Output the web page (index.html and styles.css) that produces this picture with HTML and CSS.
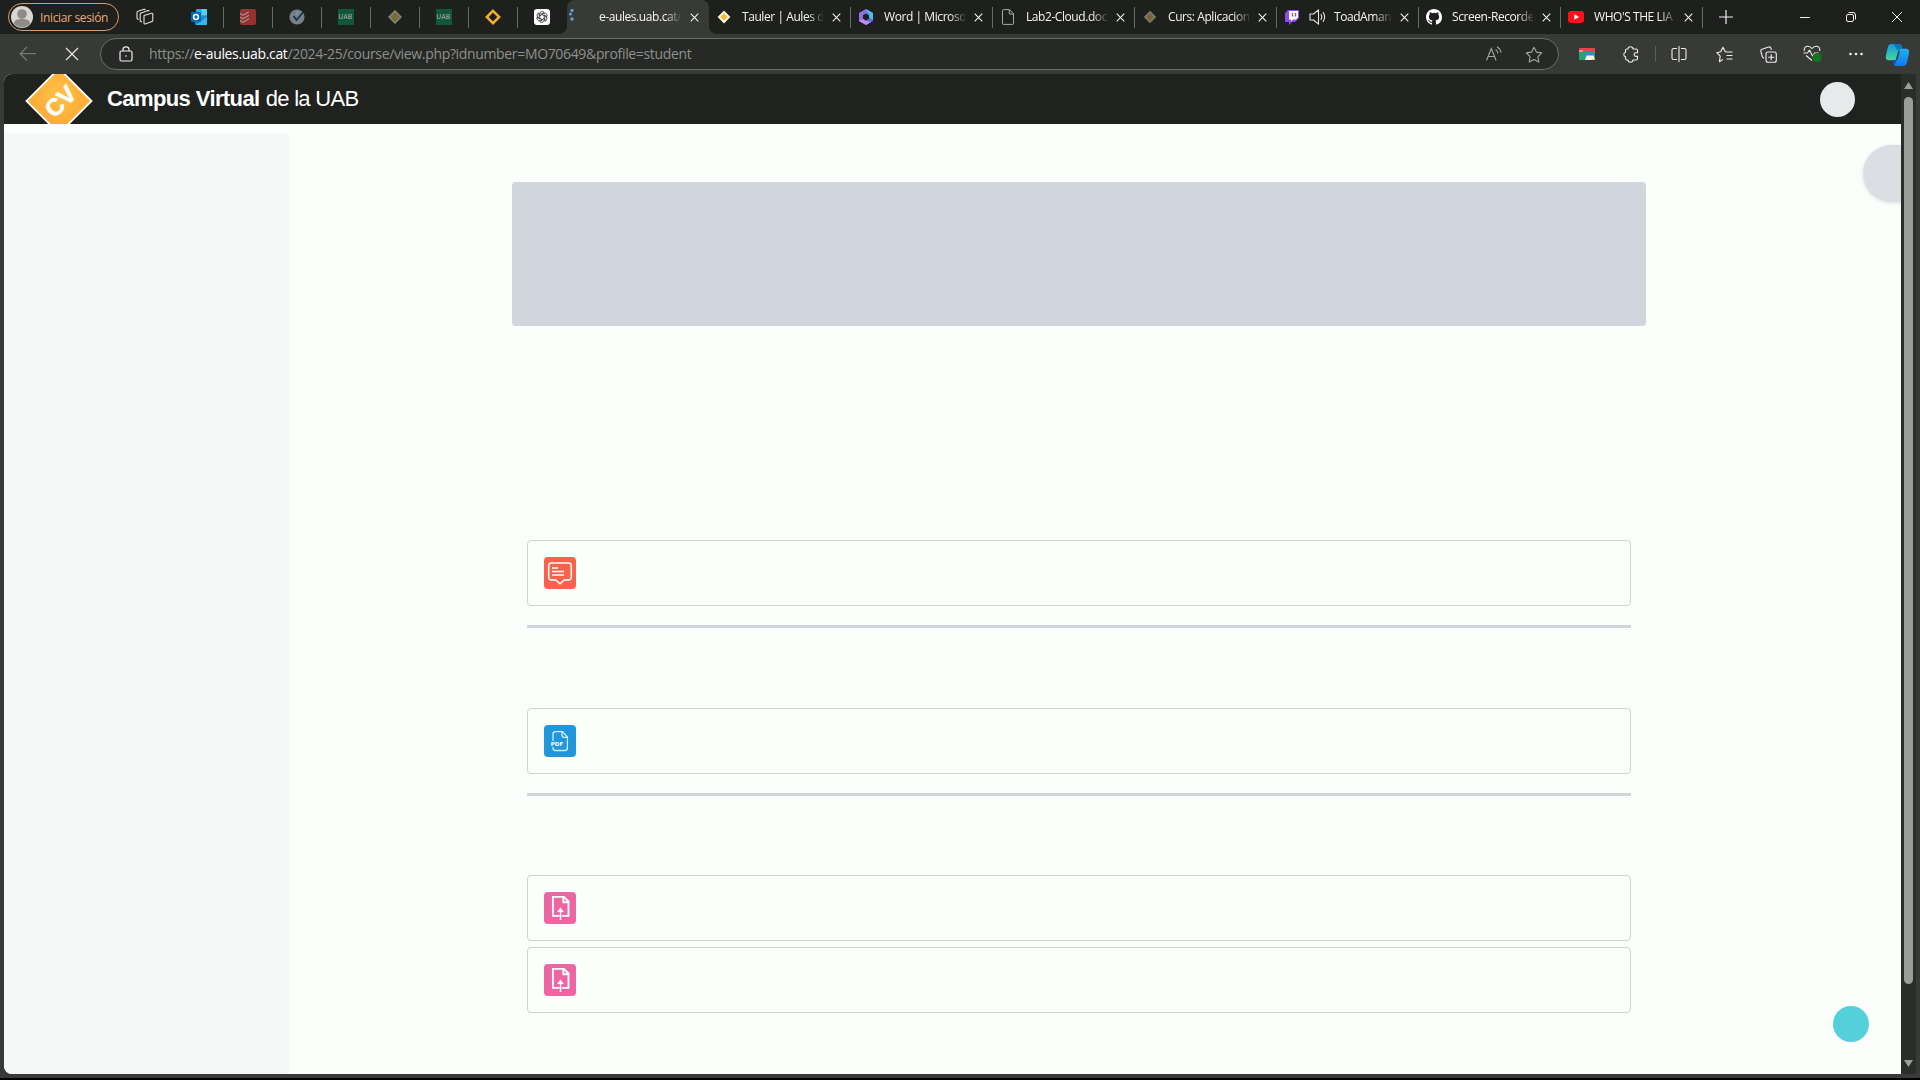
FILE: index.html
```html
<!DOCTYPE html>
<html lang="ca">
<head>
<meta charset="utf-8">
<title>Campus Virtual de la UAB</title>
<link rel="stylesheet" href="styles.css">
</head>
<body>
<svg class="defs" width="0" height="0">
  <symbol id="close" viewBox="0 0 10 10"><path d="M.8.8l8.4 8.4M9.2.8L.8 9.2" fill="none" stroke="currentColor" stroke-width="1.2"/></symbol>
  <symbol id="upload" viewBox="0 0 32 32"><path d="M15.500 23.900H8.900V4.900h11l4.600 4.600v14.400H18M19.300 5v5.200h5" fill="none" stroke="#fff" stroke-width="1.900"/><path d="M16.500 15.600l3.400 4.300h-6.800z" fill="#fff"/><path d="M16.500 18v10" stroke="#fff" stroke-width="1.500"/></symbol>
</svg>
<div class="browser">
  <header class="tabstrip">
    <button class="profile">
      <svg width="22" height="22" viewBox="0 0 22 22"><circle cx="11" cy="11" r="11" fill="#d8d6d3"/><circle cx="11" cy="8" r="4.800" fill="#8d8a87"/><path d="M3 17.500c0-3.500 3.500-4.500 8-4.500s8 1 8 4.500c-2 2.500-5 3.700-8 3.700s-6-1.200-8-3.700z" fill="#8d8a87"/></svg>
      <span>Iniciar sesión</span>
    </button>
    <div class="workspaces"><svg width="18" height="18" viewBox="0 0 18 18" fill="none" stroke="#e2e2e0" stroke-width="1.100" stroke-linejoin="round"><path d="M8 7.500l7.500-2.200q1.300-.3 1.300 1v6q0 1-1 1.300l-6.500 2.300q-1.300.4-1.300-1z"/><path d="M6 14l-1.200-.6q-.6-.3-.6-1V6.200q0-1 1-1.300L12 2.600q1-.3 1.200.8"/><path d="M2.600 11.500l-1-.5q-.6-.3-.6-1V4.500q0-1 1-1.300L8 1.300q1-.3 1.300.7"/></svg></div>
    <nav class="pinned">
      <div class="pin"><svg width="16" height="16" viewBox="0 0 16 16"><rect x="5" width="11" height="11" rx="1" fill="#28a8ea"/><path d="M10.500 0H15q1 0 1 1v5h-5.500z" fill="#50d0ff"/><path d="M4 7l12 0v8q0 1-1 1H5q-1 0-1-1z" fill="#1590d8"/><path d="M5 16L16 8v7q0 1-1 1z" fill="#35b8f1"/><rect y="3" width="10" height="10" rx="1" fill="#0668b3"/><circle cx="5" cy="8" r="2.400" fill="none" stroke="#fff" stroke-width="1.500"/></svg></div>
      <div class="pin dim"><svg width="16" height="16" viewBox="0 0 16 16"><rect width="16" height="16" rx="2" fill="#e03c3b"/><path d="M0 4.500l3 1.700 6-3.500M0 8l3 1.700 6-3.500M0 11.500l3 1.700 6-3.500" fill="none" stroke="#f1d5d1" stroke-width="1.200"/></svg></div>
      <div class="pin dim"><svg width="16" height="16" viewBox="0 0 16 16"><circle cx="8" cy="8" r="7.600" fill="#a9bccd"/><path d="M4.500 7l3 4 6.500-7.500" fill="none" stroke="#1c3552" stroke-width="1.700"/><path d="M8 2v4" stroke="#d7e3ef"/></svg></div>
      <div class="pin dim"><span class="uab">UAB</span></div>
      <div class="pin dim"><svg width="14" height="14" viewBox="0 0 14 14"><path d="M7 1l6 6-6 6-6-6z" fill="#b29b4d" stroke="#c2c1aa" stroke-width="1.500"/></svg></div>
      <div class="pin dim"><span class="uab">UAB</span></div>
      <div class="pin"><svg width="16" height="16" viewBox="0 0 16 16"><path d="M8 1.800L14.200 8 8 14.200 1.800 8z" fill="none" stroke="#f2ad35" stroke-width="2.500"/></svg></div>
      <div class="pin"><svg width="16" height="16" viewBox="0 0 16 16"><rect width="16" height="16" rx="3" fill="#fff"/><g fill="none" stroke="#222" stroke-width=".75" stroke-linejoin="round"><g id="knot"><path d="M5.800 9.300V5Q5.800 2.600 8.200 2.600q1.200 0 2 .8L7.100 5.300"/></g><use href="#knot" transform="rotate(60 8 8)"/><use href="#knot" transform="rotate(120 8 8)"/><use href="#knot" transform="rotate(180 8 8)"/><use href="#knot" transform="rotate(240 8 8)"/><use href="#knot" transform="rotate(300 8 8)"/></g></svg></div>
    </nav>
    <nav class="tabs">
      <div class="tab active"><svg class="fav spin" width="16" height="16" viewBox="0 0 16 16" fill="#5da5d0"><circle cx="5" cy="1.500" r="1.600"/><circle cx="3.500" cy="5" r="1.500"/><circle cx="5" cy="10" r="1.700"/></svg><span class="title">e-aules.uab.cat/</span><svg class="x"><use href="#close"/></svg></div>
      <div class="tab plain"><svg class="fav" width="16" height="16" viewBox="0 0 16 16"><path d="M8 3l5 5-5 5-5-5z" fill="#f6b73c" stroke="#fff4d8" stroke-width="2"/></svg><span class="title">Tauler | Aules de</span><svg class="x"><use href="#close"/></svg></div>
      <div class="tab"><svg class="fav" width="16" height="16" viewBox="0 0 16 16"><defs><linearGradient id="office" x1="0" x2="1" y1="0" y2="1"><stop stop-color="#a97ae8"/><stop offset="1" stop-color="#4b64d8"/></linearGradient></defs><path d="M8 0l7 4v8l-7 4-7-4V4z" fill="url(#office)"/><path d="M8 0l7 4v7l-4-2.500V5.500z" fill="#46bdf0"/><path d="M1 12l3-2 5 2 4 1-5 3z" fill="#c28cf3"/><path d="M8 4.600l3 1.700v3.400l-3 1.700-3-1.700V6.300z" fill="#1e201e"/></svg><span class="title">Word | Microso</span><svg class="x"><use href="#close"/></svg></div>
      <div class="tab"><svg class="fav" width="16" height="16" viewBox="0 0 16 16"><path d="M9.500.6H3.500Q2.500.6 2.500 1.600v12.800q0 1 1 1h9q1 0 1-1V4.800zM9.300.8v4.200h4" fill="none" stroke="#a9aba8"/></svg><span class="title">Lab2-Cloud.doc</span><svg class="x"><use href="#close"/></svg></div>
      <div class="tab"><svg class="fav" width="16" height="16" viewBox="0 0 16 16"><path d="M8 3l5 5-5 5-5-5z" fill="#78642d" stroke="#77776b" stroke-width="1.800"/></svg><span class="title">Curs: Aplicacion</span><svg class="x"><use href="#close"/></svg></div>
      <div class="tab audio"><svg class="fav" width="16" height="16" viewBox="0 0 16 16"><path d="M4 1h11v8l-4 4H8l-3 3v-3H1V4z" fill="#8d48ee"/><path d="M5 2h9v6.500l-2 2H9l-2 2v-2H5z" fill="#fff"/><path d="M8.500 4v3.500M11.500 4v3.500" stroke="#8d48ee" stroke-width="1.300"/></svg><svg class="sound" width="17" height="16" viewBox="0 0 17 16" fill="none" stroke="#e4e4e2" stroke-width="1.100" stroke-linejoin="round"><path d="M1 5h3.500L9.500.8v14.400L4.500 11H1z"/><path d="M12 5.500q1.500 2.500 0 5M14.200 3.500q2.800 4.500 0 9" stroke-linecap="round"/></svg><span class="title">ToadAman</span><svg class="x"><use href="#close"/></svg></div>
      <div class="tab"><svg class="fav" width="16" height="16" viewBox="0 0 16 16"><path fill="#fff" d="M8 0C3.580 0 0 3.580 0 8c0 3.540 2.290 6.530 5.470 7.590.4.070.55-.17.55-.38 0-.19-.01-.82-.01-1.490-2.010.37-2.530-.49-2.690-.94-.09-.23-.48-.94-.82-1.130-.28-.15-.68-.52-.01-.53.63-.01 1.080.58 1.230.82.720 1.210 1.870.87 2.330.66.070-.52.280-.87.510-1.070-1.780-.2-3.640-.89-3.640-3.950 0-.87.310-1.590.82-2.150-.08-.2-.36-1.020.08-2.120 0 0 .67-.21 2.200.82a7.600 7.600 0 0 1 4 0c1.530-1.040 2.200-.82 2.200-.82.44 1.100.16 1.920.08 2.120.51.560.82 1.270.82 2.150 0 3.070-1.870 3.750-3.650 3.950.29.250.54.730.54 1.480 0 1.070-.01 1.930-.01 2.200 0 .21.150.46.550.38A8.010 8.010 0 0 0 16 8c0-4.420-3.580-8-8-8z"/></svg><span class="title">Screen-Recorde</span><svg class="x"><use href="#close"/></svg></div>
      <div class="tab"><svg class="fav" width="16" height="16" viewBox="0 0 16 16"><rect y="2" width="16" height="12" rx="3" fill="#fd0f1b"/><path d="M6.300 5.300v5.400L11 8z" fill="#fff"/></svg><span class="title">WHO'S THE LIA</span><svg class="x"><use href="#close"/></svg></div>
    </nav>
    <div class="newtab"><svg width="14" height="14" viewBox="0 0 14 14"><path d="M7 0v14M0 7h14" stroke="#eee" stroke-width="1.200"/></svg></div>
    <div class="controls">
      <svg viewBox="0 0 10 10"><path d="M0 5.500h10"/></svg>
      <svg viewBox="0 0 10 10"><rect x=".5" y="2.500" width="7" height="7" rx="1.500"/><path d="M2.500.5H7q2.500 0 2.500 2.500v4.500"/></svg>
      <svg viewBox="0 0 10 10"><path d="M0 0l10 10M10 0L0 10"/></svg>
    </div>
  </header>

  <div class="toolbar">
    <div class="nav">
      <svg width="18" height="16" viewBox="0 0 18 16" fill="none" stroke="#767876" stroke-width="1.200"><path d="M8 1L1.200 7.700 8 14.500M1.200 7.700H17"/></svg>
      <svg width="14" height="14" viewBox="0 0 14 14" fill="none" stroke="#e8e8e6" stroke-width="1.200"><path d="M1 1l12 12M13 1L1 13"/></svg>
    </div>
    <div class="address">
      <svg width="14" height="16" viewBox="0 0 14 16" fill="none" stroke="#eee" stroke-width="1.200"><rect x="1" y="5" width="12" height="10" rx="1.500"/><path d="M4 5V3.500q0-2.700 3-2.700t3 2.700V5"/><circle cx="7" cy="10" r=".8" fill="#eee" stroke="none"/></svg>
      <span class="url">https://<b>e-aules.uab.cat</b>/2024-25/course/view.php?idnumber=MO70649&amp;profile=student</span>
      <svg class="aloud" width="18" height="16" viewBox="0 0 18 16" fill="none" stroke="#a4a6a3" stroke-width="1.100"><path d="M1.500 14.500L6.300 2.500l4.800 12M3 10.500h6.700M10.500 3.500q2 1 2.500 4M12 .8q3.500 2 4 6"/></svg>
      <svg width="18" height="17" viewBox="0 0 18 17" fill="none" stroke="#a4a6a3" stroke-width="1.100" stroke-linejoin="round"><path d="M9 1.200l2.400 4.900 5.400.8-3.900 3.800.9 5.400L9 13.500l-4.800 2.600.9-5.400L1.200 6.900l5.400-.8z"/></svg>
    </div>
    <div class="tools">
      <svg class="ext" width="16" height="14" viewBox="0 0 16 14"><g stroke="none"><rect y="1" width="16" height="12" rx="1" fill="#28a36b"/><path d="M1 1h14q1 0 1 1v3H0V2q0-1 1-1z" fill="#e84258"/><path d="M0 3h4v2H0z" fill="#f48a98"/><path d="M6 6h8l2 5H6z" fill="#3c82e0"/><path d="M7.500 8.500h7l1.500 4.500H6z" fill="#f4f4ec"/><path d="M12 13l4-2v2z" fill="#f2c33e"/></g></svg>
      <svg class="puzzle" width="16" height="17" viewBox="0 0 16 17"><path d="M5 3Q5 .8 7.500.8T10 3h3q1.500 0 1.500 1.500v2.300h-1.700q-1.700 0-1.700 1.800t1.700 1.800h1.700v2.100q0 1.500-1.500 1.500h-3q0 2.200-2.500 2.200T5 14H4q-1.500 0-1.500-1.500v-1.700Q.8 10.500.8 8.500t1.700-2.300V4.500Q2.500 3 4 3z"/></svg>
      <i class="rule"></i>
      <svg class="split" width="16" height="16" viewBox="0 0 16 16"><path d="M6 2.500H2.500Q1 2.500 1 4v8q0 1.500 1.500 1.500H6M10 2.500h3.500Q15 2.500 15 4v8q0 1.500-1.500 1.500H10M8 0v16"/></svg>
      <svg width="17" height="17" viewBox="0 0 17 17"><path d="M10.500 5.800H9.300L7 1.200 4.700 5.800.8 6.700l3.400 3.500-.8 5.500L7 13.400M10.500 6h6M10.500 9.500h6M10.500 13h6"/></svg>
      <svg width="17" height="17" viewBox="0 0 17 17"><rect x="6" y="6" width="10.300" height="10.300" rx="2"/><path d="M11.200 8.200v6M8.200 11.200h6M4 12.200q-1.300-.5-1.700-1.700L.9 5.500Q.5 3.800 2 3.200L8.500 1q1.500-.4 2.300 1l.7 1.700"/></svg>
      <svg width="19" height="18" viewBox="0 0 19 18"><path d="M1.300 6C.7 3 2.500 1.200 4.700 1.200q2.600 0 4.300 2.300 1.700-2.300 4.300-2.300c2.200 0 4 1.800 3.400 4.800M.5 8h4l2-3 3 6 2-3h4M3 10.500l6 5"/><circle cx="14" cy="12.500" r="4.500" fill="#13751f" stroke="none"/></svg>
      <svg width="16" height="16" viewBox="0 0 16 16"><g fill="#eee" stroke="none"><circle cx="2.500" cy="8" r="1.300"/><circle cx="8" cy="8" r="1.300"/><circle cx="13.500" cy="8" r="1.300"/></g></svg>
      <svg class="copilot" width="25" height="23" viewBox="0 0 26 24"><defs><linearGradient id="cpA" x1="0" y1="0" x2="0" y2="1"><stop stop-color="#1497e0"/><stop offset="1" stop-color="#3fdc9d"/></linearGradient><linearGradient id="cpB" x1="0" y1="0" x2="0" y2="1"><stop stop-color="#20b0ed"/><stop offset="1" stop-color="#1277f3"/></linearGradient></defs><g stroke="none"><path d="M6 1h8q3 0 3.500 3l.5 3h-1.500q-1 0-1.500 1.500L12.500 16q-.5 2-2 2H4q-4 0-3-5L3 4q.7-3 3-3z" fill="url(#cpA)"/><path d="M9 1h5q3 0 3.500 3l.5 3h-1.500q-2 0-3.500 1z" fill="#0878bd"/><path d="M17 6h5q4 0 3 5l-2 9q-1 4-4.500 4H12q-3 0-4-5h1.500q2 0 2.500-2L14.500 8q.5-2 2.500-2z" fill="url(#cpB)"/><path d="M7.500 18h4l-1 4q-2.500-1-3-4z" fill="#1445c8"/><path d="M14.800 8l-3 10" stroke="#383a37" stroke-width="1.600"/></g></svg>
    </div>
  </div>

  <div class="viewport">
    <div class="page">
      <div class="navbar">
        <svg class="logo" width="68" height="50" viewBox="0 0 68 50"><defs><radialGradient id="gold" cx=".5" cy=".4" r=".6"><stop stop-color="#ffc14b"/><stop offset="1" stop-color="#fba52b"/></radialGradient></defs><path d="M34-5.500L66.500 27 34 59.500 1.500 27z" fill="url(#gold)" stroke="#fff" stroke-width="1.800"/><text transform="translate(29.500 45) rotate(-45)" class="cv">CV</text></svg>
        <div class="brand"><strong>Campus Virtual</strong> <span>de la UAB</span></div>
        <div class="avatar"></div>
      </div>
      <div class="body">
        <aside class="sidebar"></aside>
        <main>
          <div class="banner"></div>
          <div class="sections">
            <section><div class="card"><svg class="act forum" viewBox="0 0 32 32"><path d="M7.500 6h17q2.800 0 2.800 3v11q0 3-2.800 3h-4.300l-4.200 3.800L11.800 23H7.500q-2.800 0-2.800-3V9q0-3 2.800-3z" fill="none" stroke="#fff" stroke-width="1.500"/><path d="M8 11h6M8 14.500h12M8 18h12" stroke="#fff" stroke-width="1.300"/></svg></div></section>
            <section><div class="card"><svg class="act pdf" viewBox="0 0 32 32"><path d="M9 16V9q0-2.400 2.500-2.400h7L23.400 12v11q0 2.500-2.500 2.500h-9.400Q9 25.500 9 23v-1M18 7v3q0 2.300 2.300 2.300h3" fill="none" stroke="#cfeeff" stroke-width="1.300"/><text x="6.800" y="21.200">PDF</text></svg></div></section>
            <section><div class="card"><svg class="act task"><use href="#upload"/></svg></div><div class="card"><svg class="act task"><use href="#upload"/></svg></div></section>
          </div>
        </main>
      </div>
      <div class="drawer-toggle"></div>
      <div class="help"></div>
    </div>
    <div class="scrollbar"><i class="up"></i><div class="thumb"></div><i class="down"></i></div>
  </div>
</div>
</body>
</html>
```
FILE: styles.css
```css
* { box-sizing: border-box; }
body { margin: 0; background: #000; overflow: hidden; font-family: "Open Sans", "Noto Sans", sans-serif; }
svg { display: block; flex: none; }
.defs { position: absolute; }
.browser { width: 1920px; height: 1078px; background: #383a37; display: flex; flex-direction: column; }

/* Tab strip */
.tabstrip { height: 34px; flex: none; background: #1e201e; display: flex; }
.profile { width: 111px; height: 28px; margin: 3px 0 0 8px; padding: 0 0 0 2px; border: 1px solid #d99b70; border-radius: 14px; background: none; display: flex; align-items: center; gap: 7px; font: 12px "Open Sans", sans-serif; letter-spacing: -.35px; color: #e9a77c; white-space: nowrap; }
.workspaces { width: 56px; display: flex; align-items: center; padding-left: 17px; }
.pinned { display: flex; width: 392px; }
.pin { width: 49px; display: flex; align-items: center; justify-content: center; padding-right: 2px; position: relative; }
.pin.dim > * { opacity: .62; }
.pin:not(:last-child)::after, .tab:not(.active)::after { content: ""; position: absolute; right: 0; top: 7px; width: 1px; height: 21px; background: #686a67; }
.uab { width: 16px; height: 16px; background: #0b7a4c; color: #c9dfd2; font: bold 6.5px/16px "Liberation Sans", sans-serif; text-align: center; }
.tabs { display: flex; }
.tab { width: 142px; height: 34px; padding: 0 10px 0 7px; display: flex; align-items: center; position: relative; color: #f4f4f2; font-size: 12px; letter-spacing: -.43px; }
.tab .title { width: 81px; margin-left: 10px; margin-top: -1px; white-space: nowrap; overflow: hidden; -webkit-mask-image: linear-gradient(90deg, #000 66px, transparent 83px); mask-image: linear-gradient(90deg, #000 66px, transparent 83px); }
.tab.audio .title { width: 57px; margin-left: 9px; -webkit-mask-image: linear-gradient(90deg, #000 40px, transparent 59px); mask-image: linear-gradient(90deg, #000 40px, transparent 59px); }
.tab .sound { margin-left: 9px; margin-right: -1px; }
.tab .x { width: 9px; height: 9px; margin-left: auto; }
.tab.active { background: #383a37; border-radius: 8px 8px 0 0; padding-left: 0; }
.tab.active .title { margin-left: 16px; }
.tab.active::before, .tab.active::after { content: ""; position: absolute; bottom: 0; width: 7px; height: 7px; }
.tab.active::before { left: -7px; background: radial-gradient(circle at 0 0, transparent 6.5px, #383a37 7px); }
.tab.active::after { right: -7px; background: radial-gradient(circle at 100% 0, transparent 6.5px, #383a37 7px); }
.newtab { width: 45px; display: flex; align-items: center; justify-content: center; }
.controls { margin-left: auto; display: flex; align-items: center; gap: 36px; padding-right: 18px; }
.controls svg { width: 10px; height: 10px; fill: none; stroke: #f0f0ee; overflow: visible; }

/* Toolbar */
.toolbar { height: 40px; flex: none; display: flex; align-items: center; }
.nav { width: 100px; display: flex; align-items: center; gap: 28px; padding-left: 19px; }
.address { width: 1459px; height: 32px; border: 1px solid #6b6d6a; border-radius: 16px; background: #272926; display: flex; align-items: center; padding: 0 15px 0 18px; }
.url { margin-left: 16px; margin-top: -1px; font-size: 14px; letter-spacing: -.34px; color: #8e908d; white-space: nowrap; }
.url b { font-weight: 400; color: #fff; }
.aloud { margin-left: auto; margin-right: 22px; }
.tools { flex: 1; display: grid; grid-template-columns: 56px 32px 16px 32px 58px 30px 58px 30px 49px; align-items: center; justify-items: center; }
.tools svg { fill: none; stroke: #eee; stroke-width: 1.1; stroke-linejoin: round; }
.tools .copilot { margin-left: 4px; }
.rule { width: 1px; height: 16px; background: #5c5e5b; }

/* Page */
.viewport { height: 1000px; margin: 0 4px; display: flex; border-radius: 8px 0 0 8px; overflow: hidden; background: #2b2d2a; }
.page { width: 1897px; background: #fcfefb; position: relative; overflow: hidden; }
.navbar { height: 50px; background: #20221f; display: flex; align-items: center; padding-left: 21px; }
.logo { overflow: hidden; }
.cv { font: bold 24px "Liberation Sans", sans-serif; fill: #fff; stroke: #fff; stroke-width: .6px; }
.brand { margin-left: 14px; font: 22px "Liberation Sans", sans-serif; color: #fff; white-space: nowrap; }
.brand strong { letter-spacing: -.6px; }
.brand span { letter-spacing: -.7px; }
.avatar { width: 35px; height: 35px; margin-left: auto; margin-right: 46px; border-radius: 50%; background: #e7e9eb; }
.body { height: 950px; display: flex; }
.sidebar { width: 285px; margin-top: 9px; background: #f6f8f7; }
main { width: 1134px; margin-left: 223px; padding-top: 58px; }
.banner { height: 144px; border-radius: 4px; background: #d1d5dd; }
.sections { padding: 214px 15px 0; }
section + section { border-top: 3px solid #d1d4da; margin-top: 19px; padding-top: 80px; }
section:last-child { padding-top: 79px; }
.card { height: 66px; border: 1px solid #d0d2d1; border-radius: 4px; padding: 16px; }
.card + .card { margin-top: 6px; }
.act { width: 32px; height: 32px; border-radius: 4px; }
.forum { background: #f7634d; }
.pdf { background: #2196d9; }
.pdf text { font: bold 5.5px "DejaVu Sans", sans-serif; fill: #fff; }
.task { background: #eb66a2; }
.drawer-toggle { position: absolute; left: 1859px; top: 71px; width: 60px; height: 57px; border-radius: 29px 0 0 29px; background: #dbdfe3; box-shadow: 0 1px 4px rgba(0,0,0,.12); }
.help { position: absolute; left: 1829px; top: 932px; width: 36px; height: 36px; border-radius: 50%; background: #54d0da; }
.scrollbar { flex: 1; display: flex; flex-direction: column; align-items: center; padding: 8px 0 7px; }
.thumb { width: 9px; height: 887px; margin-top: 8px; border-radius: 5px; background: #9b9d9a; }
.up, .down { width: 9px; height: 7px; background: #9b9d9a; clip-path: polygon(50% 0, 100% 100%, 0 100%); }
.down { margin-top: auto; clip-path: polygon(0 0, 100% 0, 50% 100%); }
```
